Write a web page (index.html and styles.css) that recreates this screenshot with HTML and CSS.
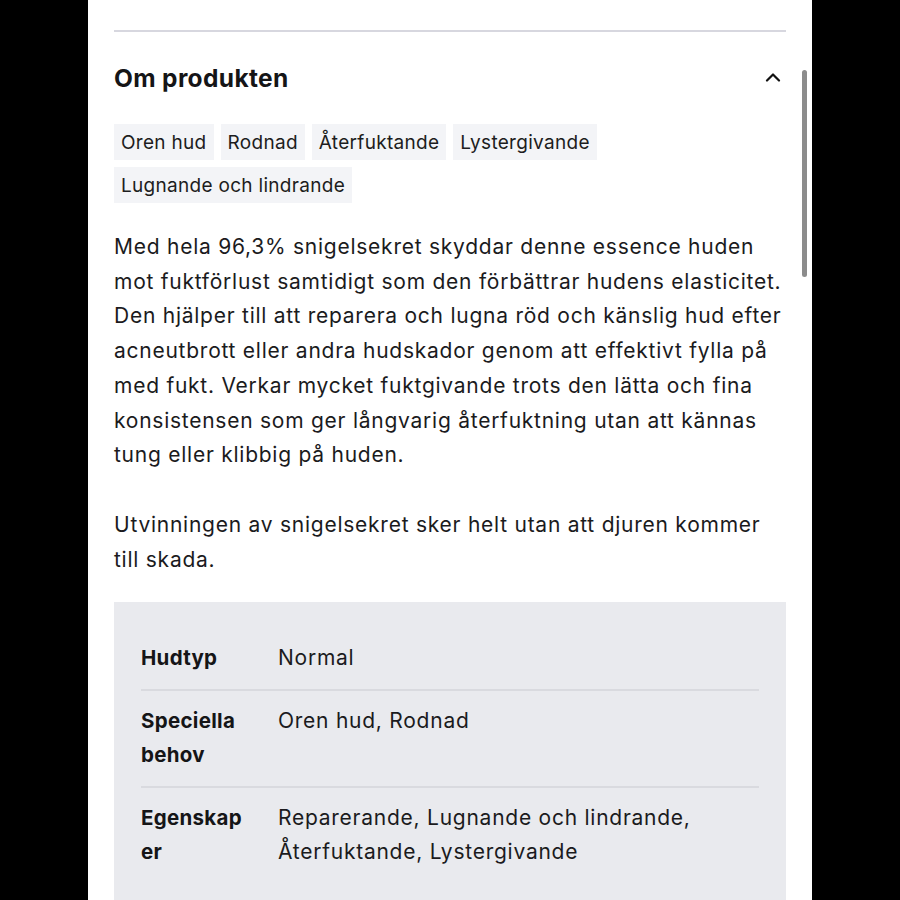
FILE: index.html
```html
<!DOCTYPE html>
<html lang="sv">
<head>
<meta charset="utf-8">
<title>Om produkten</title>
<link rel="stylesheet" href="styles.css">
</head>
<body>
<div class="frame">
  <main class="panel">
    <hr class="divider">
    <div class="header">
      <h2 class="title">Om produkten</h2>
      <svg class="chevron" width="16" height="10" viewBox="0 0 16 10" aria-hidden="true">
        <path d="M2 8.5 L8 2.5 L14 8.5" fill="none" stroke="#111" stroke-width="2.2" stroke-linecap="round" stroke-linejoin="round"/>
      </svg>
    </div>
    <ul class="tags">
      <li class="tag">Oren hud</li>
      <li class="tag">Rodnad</li>
      <li class="tag">Återfuktande</li>
      <li class="tag">Lystergivande</li>
      <li class="tag">Lugnande och lindrande</li>
    </ul>
    <p class="text">Med hela 96,3% snigelsekret skyddar denne essence huden mot fuktförlust samtidigt som den förbättrar hudens elasticitet. Den hjälper till att reparera och lugna röd och känslig hud efter acneutbrott eller andra hudskador genom att effektivt fylla på med fukt. Verkar mycket fuktgivande trots den lätta och fina konsistensen som ger långvarig återfuktning utan att kännas tung eller klibbig på huden.</p>
    <p class="text text-last">Utvinningen av snigelsekret sker helt utan att djuren kommer till skada.</p>
    <div class="specs">
      <div class="row">
        <div class="label">Hudtyp</div>
        <div class="value">Normal</div>
      </div>
      <div class="row">
        <div class="label">Speciella behov</div>
        <div class="value">Oren hud, Rodnad</div>
      </div>
      <div class="row">
        <div class="label">Egenskaper</div>
        <div class="value">Reparerande, Lugnande och lindrande, Återfuktande, Lystergivande</div>
      </div>
    </div>
    <div class="scrollbar"></div>
  </main>
</div>
</body>
</html>
```
FILE: styles.css
```css
* { box-sizing: border-box; }
html, body {
  margin: 0;
  padding: 0;
  background: #000;
  height: 900px;
  overflow: hidden;
}
body {
  font-family: Inter, "Noto Sans", sans-serif;
  color: #1b1b1d;
}
.frame {
  display: flex;
  justify-content: flex-start;
  padding-left: 88px;
  height: 900px;
}
.panel {
  position: relative;
  width: 724px;
  height: 900px;
  background: #fff;
  padding: 30px 26px 0 26px;
}
.divider {
  margin: 0;
  border: 0;
  height: 2px;
  background: #d7d7df;
}
.header {
  display: flex;
  align-items: center;
  justify-content: space-between;
  margin-top: 27px;
  height: 38px;
}
.title {
  margin: 0;
  font-size: 24.5px;
  font-weight: 700;
  letter-spacing: 0.35px;
  color: #151517;
}
.chevron {
  margin-right: 5px;
  margin-top: -2px;
}
.tags {
  list-style: none;
  margin: 27px 0 0 0;
  padding: 0;
  display: flex;
  flex-wrap: wrap;
  gap: 7px;
}
.tag {
  background: #f3f4f7;
  height: 36px;
  display: flex;
  align-items: center;
  padding: 0 7px;
  font-size: 19px;
  letter-spacing: 0.3px;
  color: #1d1d20;
}
.text {
  margin: 27px 0 35px 0;
  font-size: 21px;
  line-height: 34.7px;
  letter-spacing: 0.75px;
  color: #1b1b1d;
}
.text + .text { margin-top: 0; }
.text-last { margin-bottom: 25px; }
.specs {
  background: #e9eaee;
  padding: 26px 27px 30px 27px;
}
.row {
  display: grid;
  grid-template-columns: 137px 1fr;
  padding: 13px 0;
  border-bottom: 2px solid #d9dadf;
  font-size: 21px;
  line-height: 34.5px;
  letter-spacing: 0.75px;
}
.row:last-child { border-bottom: 0; }
.label {
  font-size: 20.5px;
  font-weight: 700;
  letter-spacing: 0.3px;
  padding-right: 24px;
  overflow-wrap: anywhere;
  color: #151517;
}
.value { color: #1b1b1d; }
.scrollbar {
  position: absolute;
  top: 70px;
  right: 5px;
  width: 5px;
  height: 207px;
  border-radius: 3px;
  background: #8c8c8c;
}
```
